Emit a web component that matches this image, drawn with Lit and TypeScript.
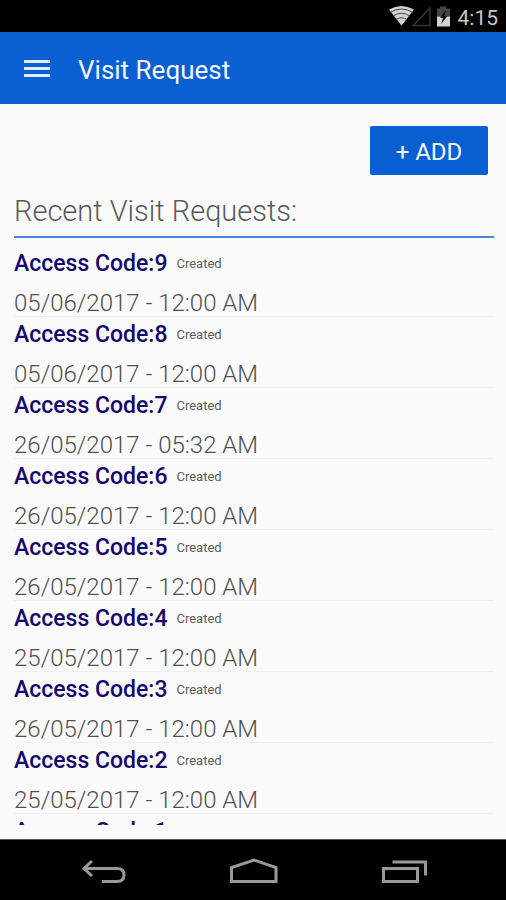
import { LitElement, html, css } from "lit";
import { customElement, property } from "lit/decorators.js";

interface Visit {
  code: number;
  status: string;
  when: string;
}

const VISITS: Visit[] = [
  { code: 9, status: "Created", when: "05/06/2017 - 12:00 AM" },
  { code: 8, status: "Created", when: "05/06/2017 - 12:00 AM" },
  { code: 7, status: "Created", when: "26/05/2017 - 05:32 AM" },
  { code: 6, status: "Created", when: "26/05/2017 - 12:00 AM" },
  { code: 5, status: "Created", when: "26/05/2017 - 12:00 AM" },
  { code: 4, status: "Created", when: "25/05/2017 - 12:00 AM" },
  { code: 3, status: "Created", when: "26/05/2017 - 12:00 AM" },
  { code: 2, status: "Created", when: "25/05/2017 - 12:00 AM" },
  { code: 1, status: "Created", when: "25/05/2017 - 12:00 AM" },
];

@customElement("status-bar")
class StatusBar extends LitElement {
  static styles = css`
    :host {
      display: flex;
      flex: none;
      align-items: center;
      justify-content: flex-end;
      height: 32px;
      padding-right: 8px;
      background: #000;
      color: #c8c8c8;
      font-size: 21px;
      line-height: 32px;
    }
    svg {
      display: block;
    }
    .time {
      margin-left: 7px;
      padding-top: 3px;
    }
  `;
  render() {
    return html`
      <svg width="62" height="32" viewBox="0 0 62 32" aria-hidden="true">
        <path d="M0 9.5Q12.500 2.500 25 9.500L12.500 25.500Z" fill="#d2d2d2" />
        <path d="M1 12.500Q12.500 5.500 24 12.500M4 16Q12.500 10.500 21 16M7 19.500Q12.500 16 18 19.500" fill="none" stroke="#444" stroke-width="1" />
        <path d="M41 8V25.500H24Z" fill="none" stroke="#343434" stroke-width="1.400" />
        <path d="M48 8.500h3V6.500h6V8.500h4v8H48Z" fill="#444" />
        <path d="M48 16.500h13v10H48Z" fill="#d2d2d2" />
        <path d="M57 10L51 18h3.200L52 24L58.500 16h-3.500Z" fill="#000" />
      </svg>
      <span class="time">4:15</span>
    `;
  }
}

@customElement("visit-row")
class VisitRow extends LitElement {
  @property({ attribute: false }) visit!: Visit;

  static styles = css`
    :host {
      display: block;
      box-sizing: border-box;
      height: 71px;
      border-bottom: 1px solid #f0f0f0;
    }
    .head {
      display: flex;
      align-items: center;
      gap: 9px;
      height: 36px;
    }
    .code {
      color: #14086e;
      font-size: 23px;
      font-weight: 500;
      line-height: 36px;
    }
    .status {
      color: #5c5c5c;
      font-size: 13px;
      line-height: 36px;
    }
    .when {
      color: #505050;
      font-size: 24px;
      font-weight: 300;
      line-height: 42px;
    }
  `;
  render() {
    return html`
      <div class="head">
        <span class="code">Access Code:${this.visit.code}</span>
        <span class="status">${this.visit.status}</span>
      </div>
      <div class="when">${this.visit.when}</div>
    `;
  }
}

@customElement("nav-bar")
class NavBar extends LitElement {
  static styles = css`
    :host {
      display: flex;
      flex: none;
      justify-content: center;
      box-sizing: border-box;
      height: 61px;
      border-top: 1px solid #555;
      background: #000;
    }
    button {
      display: grid;
      place-items: center;
      width: 150px;
      padding: 4px 0 0;
      border: 0;
      background: none;
    }
    svg {
      display: block;
      fill: none;
      stroke: #999;
      stroke-width: 3;
    }
  `;
  render() {
    return html`
      <button aria-label="Back">
        <svg width="50" height="28" viewBox="0 0 50 28">
          <path d="M14 3L6 10.500L14 18M6 10.500H39Q46 10.500 46 17Q46 23.500 39 23.500H24" />
        </svg>
      </button>
      <button aria-label="Home">
        <svg width="50" height="28" viewBox="0 0 50 28">
          <path d="M3.500 23.500V9.500L26 2L48 9.500V23.500Z" />
        </svg>
      </button>
      <button aria-label="Recent apps">
        <svg width="50" height="28" viewBox="0 0 50 28">
          <path d="M5.500 10.500H39.500V23.500H5.500ZM14.500 4H47.500V17.500" />
        </svg>
      </button>
    `;
  }
}

@customElement("app-root")
class AppRoot extends LitElement {
  static styles = css`
    :host {
      display: flex;
      flex-direction: column;
      height: 100vh;
      background: #fafafa;
      font-family: Roboto, "Noto Sans", sans-serif;
    }
    header {
      display: flex;
      flex: none;
      align-items: center;
      gap: 28px;
      height: 72px;
      padding: 0 24px;
      background: #0a60d2;
      color: #f4f7ff;
    }
    .menu {
      display: grid;
      gap: 4px;
      width: 26px;
      padding: 0;
      border: 0;
      background: none;
    }
    .bar {
      height: 3px;
      background: #e4edff;
    }
    h1 {
      margin: 0;
      padding-top: 4px;
      font-size: 26px;
      font-weight: 400;
      line-height: 32px;
    }
    main {
      display: flex;
      flex: 1;
      flex-direction: column;
      min-height: 0;
      padding: 22px 12px 14px 14px;
    }
    .add {
      align-self: flex-end;
      flex: none;
      width: 118px;
      height: 49px;
      margin-right: 6px;
      padding: 2px 0 0;
      border: 0;
      border-radius: 2px;
      background: #0a60d2;
      color: #f4f7ff;
      font: 400 24px/32px Roboto, "Noto Sans", sans-serif;
    }
    h2 {
      flex: none;
      margin: 13px 0 8px;
      padding-bottom: 2px;
      border-bottom: 2px solid #4a86d8;
      color: #5a5a5a;
      font-size: 29px;
      font-weight: 300;
      line-height: 46px;
    }
    .list {
      flex: 1;
      min-height: 0;
      overflow: hidden;
    }
  `;
  render() {
    return html`
      <status-bar></status-bar>
      <header>
        <button class="menu" aria-label="Menu">
          <span class="bar"></span><span class="bar"></span><span class="bar"></span>
        </button>
        <h1>Visit Request</h1>
      </header>
      <main>
        <button class="add">+ ADD</button>
        <h2>Recent Visit Requests:</h2>
        <div class="list">
          ${VISITS.map((v) => html`<visit-row .visit=${v}></visit-row>`)}
        </div>
      </main>
      <nav-bar></nav-bar>
    `;
  }
}
